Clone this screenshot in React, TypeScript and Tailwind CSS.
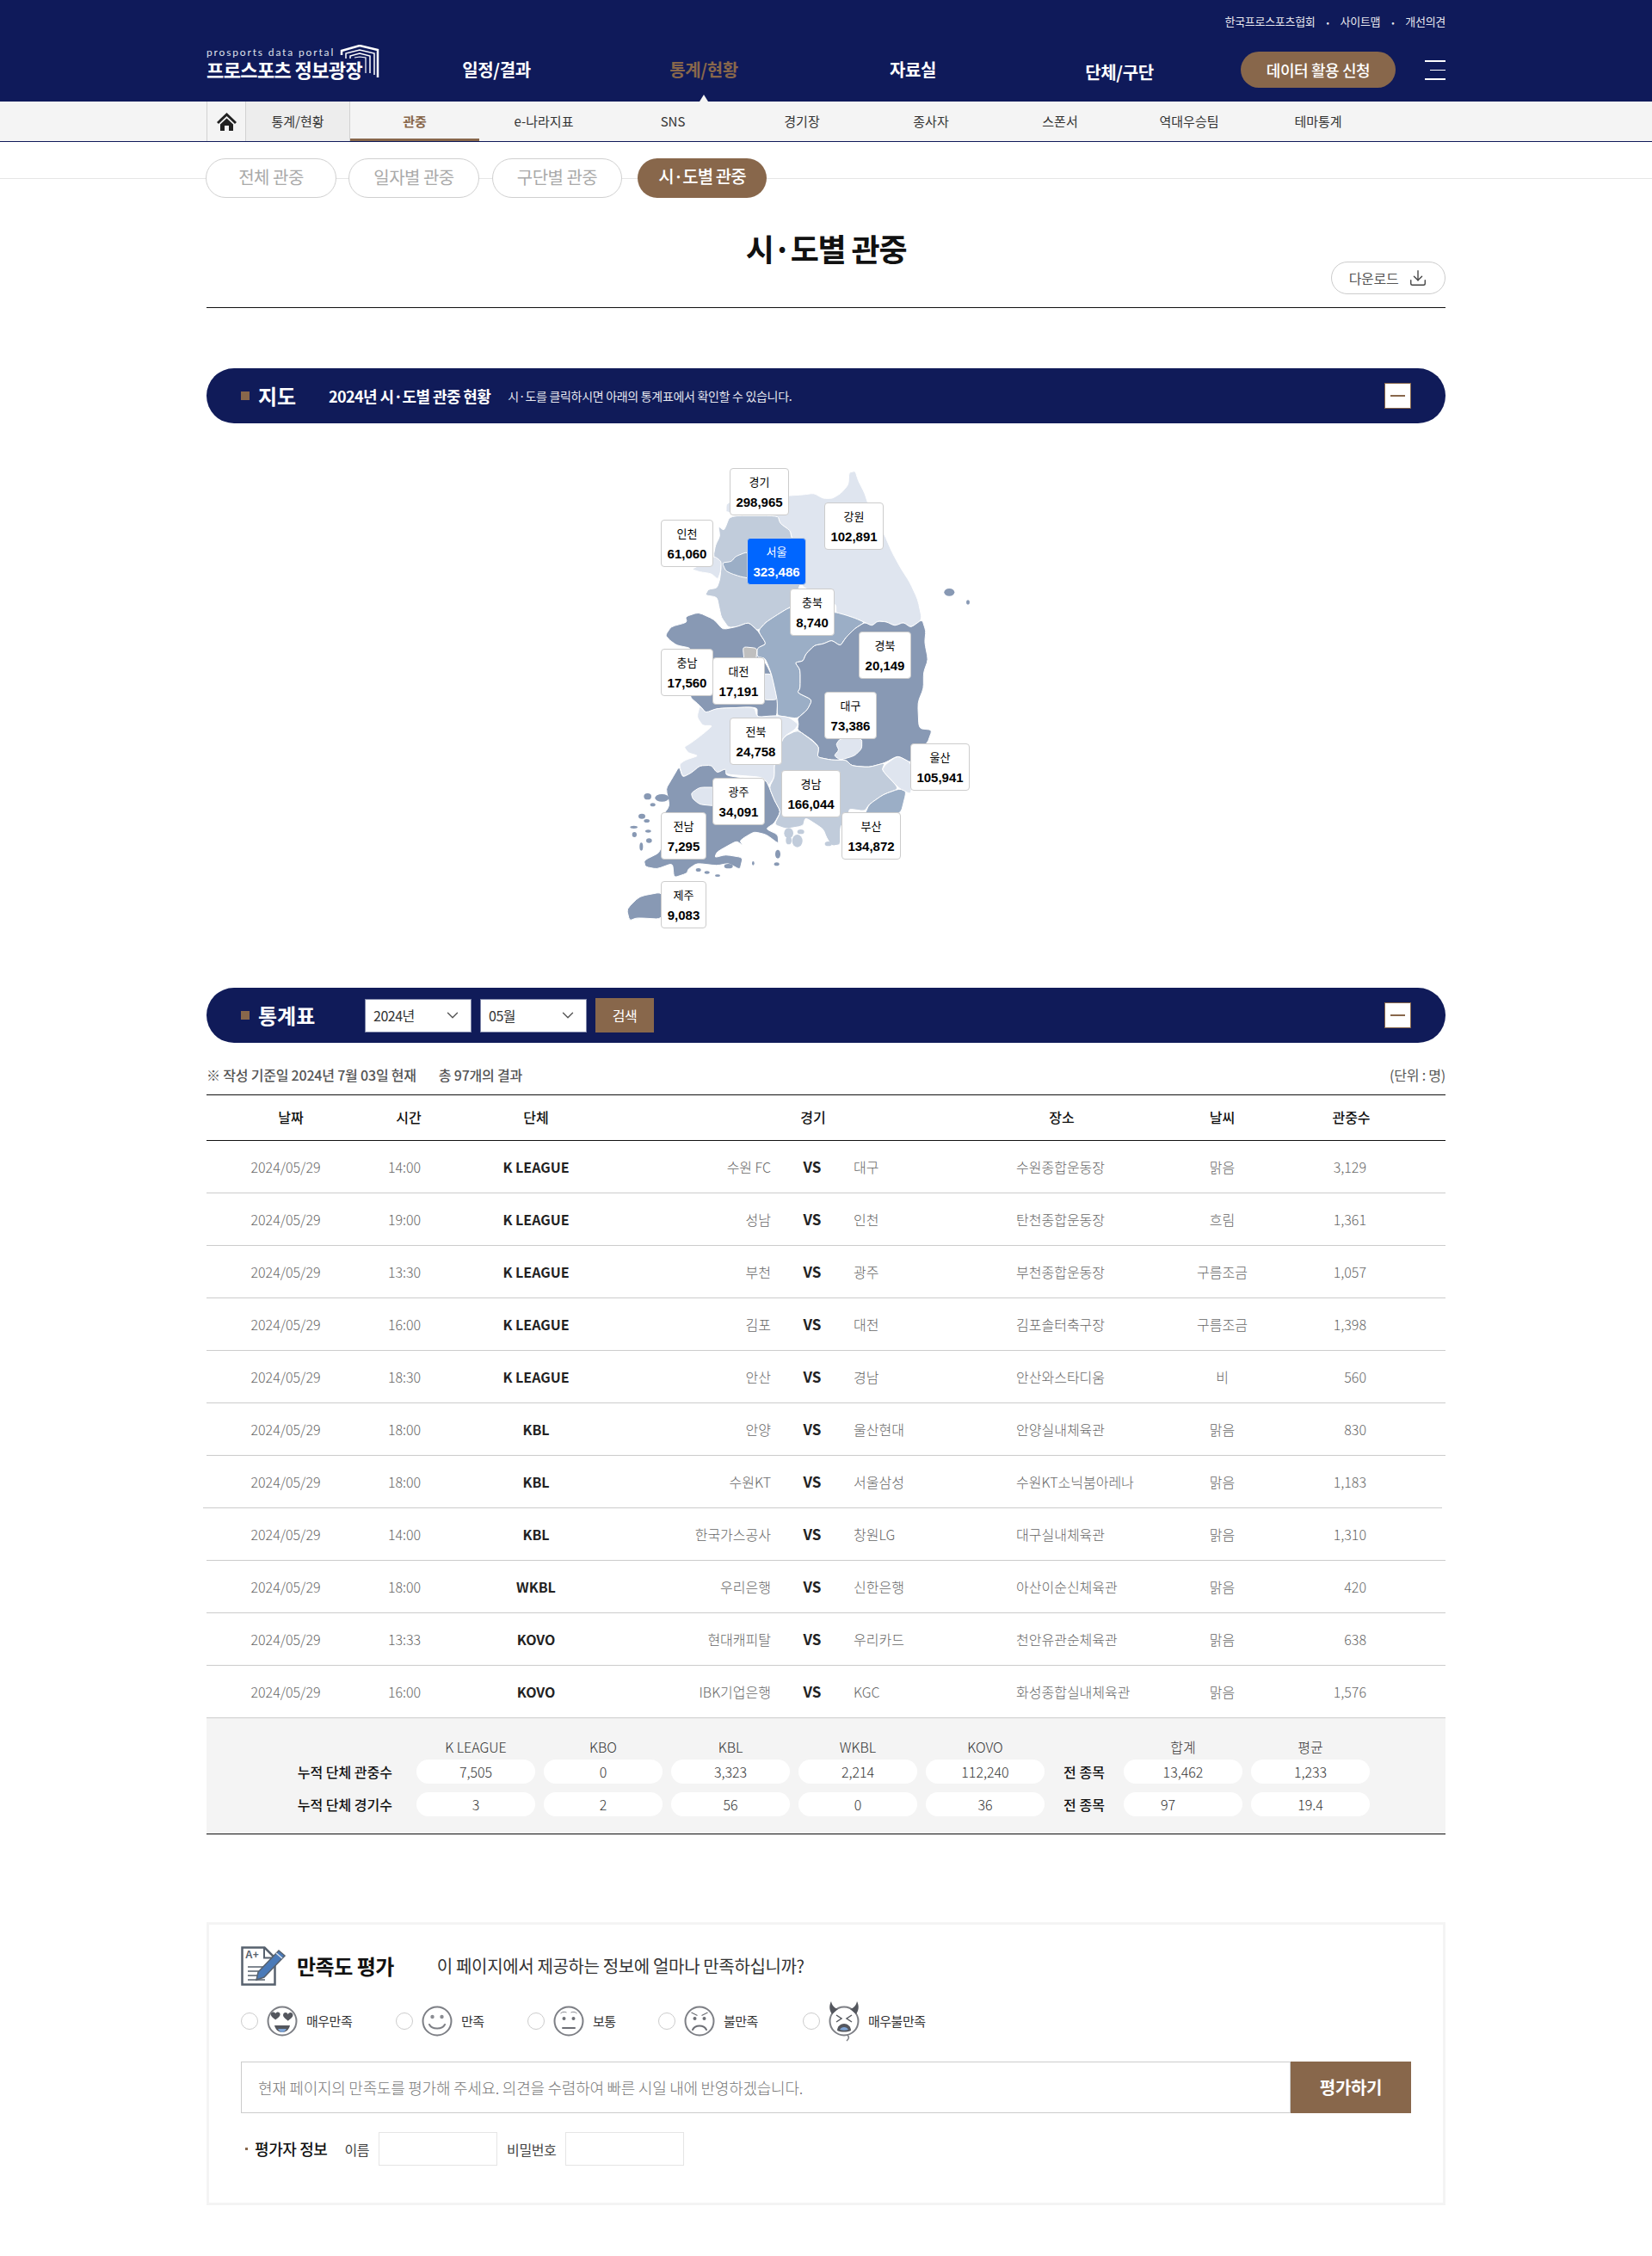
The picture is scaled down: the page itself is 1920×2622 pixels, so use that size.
import React from 'react';
import { Download, ChevronDown } from 'lucide-react';

type Pt = [number, number];

// rounds the corners of a point list a little, without losing the shape of the region
const smooth = (pts: Pt[]) => {
  const n = pts.length;
  let d = '';
  for (let i = 0; i < n; i++) {
    const a = pts[i];
    const p = pts[(i - 1 + n) % n];
    const q = pts[(i + 1) % n];
    const sx = a[0] + (p[0] - a[0]) * 0.25;
    const sy = a[1] + (p[1] - a[1]) * 0.25;
    const ex = a[0] + (q[0] - a[0]) * 0.25;
    const ey = a[1] + (q[1] - a[1]) * 0.25;
    d += `${i === 0 ? 'M' : 'L'}${sx} ${sy}Q${a[0]} ${a[1]} ${ex} ${ey}`;
  }
  return `${d}Z`;
};

const LIGHT = '#dfe5ef';
const MID = '#c1ccdb';
const BLUE = '#9baec6';
const DARK = '#8899b4';

const REGIONS: { fill: string; pts: Pt[] }[] = [
  // gangwon
  { fill: LIGHT, pts: [[860, 88], [882, 82], [892, 115], [915, 160], [926, 195], [982, 300], [1010, 365], [1040, 420], [1072, 470], [1100, 530], [1115, 600], [1076, 628], [1050, 610], [1020, 622], [990, 608], [960, 606], [940, 622], [915, 610], [880, 595], [850, 585], [815, 578], [815, 548], [760, 520], [690, 480], [710, 400], [660, 312], [655, 290], [620, 265], [612, 240], [432, 228], [432, 200], [445, 190], [652, 168], [700, 165], [738, 160], [770, 178], [802, 178], [832, 160], [858, 130]] },
  // gyeonggi
  { fill: MID, pts: [[445, 238], [612, 238], [620, 265], [655, 290], [660, 315], [710, 400], [690, 480], [655, 558], [640, 565], [600, 590], [570, 610], [543, 640], [510, 610], [470, 625], [440, 628], [415, 592], [408, 560], [400, 522], [358, 515], [370, 495], [400, 490], [410, 460], [415, 410], [387, 380], [395, 340], [410, 310], [405, 275], [425, 290]] },
  // incheon
  { fill: LIGHT, pts: [[388, 378], [415, 397], [412, 435], [403, 460], [380, 440], [340, 434], [312, 425], [340, 410]] },
  // seoul
  { fill: BLUE, pts: [[418, 402], [450, 398], [465, 380], [500, 366], [520, 370], [520, 458], [480, 450], [450, 440], [430, 430]] },
  // chungnam
  { fill: DARK, pts: [[220, 655], [240, 625], [295, 610], [290, 590], [335, 575], [390, 600], [420, 635], [470, 625], [510, 610], [543, 640], [572, 685], [540, 700], [590, 790], [612, 880], [608, 942], [540, 942], [540, 905], [400, 910], [385, 922], [360, 925], [340, 900], [305, 870], [300, 760], [310, 700], [260, 690], [235, 672]] },
  // sejong
  { fill: '#bfbfbf', pts: [[490, 695], [540, 700], [536, 745], [495, 745]] },
  // daejeon
  { fill: LIGHT, pts: [[560, 790], [590, 790], [602, 840], [610, 880], [560, 880]] },
  // chungbuk
  { fill: BLUE, pts: [[543, 640], [570, 610], [600, 590], [640, 565], [655, 558], [815, 575], [850, 585], [880, 595], [915, 610], [880, 632], [850, 662], [830, 692], [800, 672], [770, 685], [740, 690], [710, 720], [700, 745], [672, 750], [690, 775], [690, 840], [680, 855], [732, 880], [715, 915], [680, 945], [640, 940], [610, 935], [610, 880], [590, 790], [568, 735], [540, 730], [540, 700], [572, 685]] },
  // jeonbuk
  { fill: LIGHT, pts: [[340, 900], [360, 925], [400, 910], [530, 905], [540, 940], [605, 935], [650, 940], [684, 965], [670, 985], [630, 1010], [600, 1105], [600, 1150], [580, 1180], [560, 1150], [430, 1140], [430, 1120], [400, 1135], [380, 1108], [340, 1110], [310, 1135], [280, 1150], [268, 1105], [290, 1090], [335, 1075], [300, 1065], [285, 1045], [310, 1030], [350, 1000], [385, 970], [350, 970], [330, 940]] },
  // jeonnam
  { fill: DARK, pts: [[268, 1112], [280, 1150], [310, 1135], [340, 1110], [380, 1108], [400, 1135], [430, 1120], [432, 1145], [570, 1160], [582, 1185], [600, 1230], [622, 1270], [600, 1310], [570, 1330], [612, 1350], [615, 1382], [572, 1350], [530, 1340], [495, 1360], [480, 1372], [490, 1388], [468, 1372], [400, 1410], [392, 1430], [430, 1420], [490, 1430], [480, 1472], [440, 1450], [400, 1458], [330, 1450], [300, 1470], [295, 1485], [250, 1500], [245, 1450], [190, 1470], [150, 1462], [145, 1440], [205, 1410], [205, 1290], [235, 1250], [222, 1190], [240, 1160]] },
  // gwangju
  { fill: LIGHT, pts: [[310, 1205], [340, 1185], [395, 1185], [395, 1250], [340, 1245], [315, 1225]] },
  // gyeongbuk
  { fill: DARK, pts: [[915, 610], [940, 622], [960, 606], [990, 608], [1020, 622], [1050, 610], [1076, 628], [1115, 600], [1128, 640], [1124, 680], [1136, 740], [1120, 785], [1120, 840], [1100, 890], [1104, 980], [1150, 985], [1132, 1035], [1076, 1050], [1076, 1100], [1030, 1075], [985, 1100], [930, 1115], [870, 1110], [850, 1090], [800, 1090], [750, 1080], [755, 1045], [735, 1022], [680, 985], [684, 965], [680, 945], [715, 915], [732, 880], [680, 855], [690, 840], [690, 775], [672, 750], [700, 745], [710, 720], [740, 690], [770, 685], [800, 672], [830, 692], [850, 662], [880, 632]] },
  // daegu
  { fill: LIGHT, pts: [[830, 1015], [905, 1015], [905, 1050], [880, 1075], [830, 1090], [808, 1075], [825, 1055], [815, 1035]] },
  // gyeongnam
  { fill: MID, pts: [[682, 985], [735, 1025], [755, 1045], [750, 1080], [800, 1090], [850, 1090], [870, 1110], [930, 1115], [985, 1100], [975, 1125], [1035, 1190], [980, 1210], [930, 1245], [915, 1268], [860, 1260], [860, 1290], [830, 1320], [830, 1385], [800, 1390], [782, 1360], [770, 1330], [708, 1290], [700, 1320], [640, 1330], [600, 1315], [622, 1270], [600, 1230], [582, 1185], [600, 1150], [600, 1105], [630, 1010]] },
  // ulsan
  { fill: LIGHT, pts: [[988, 1105], [1030, 1075], [1078, 1100], [1078, 1210], [1036, 1190], [975, 1125]] },
  // busan
  { fill: BLUE, pts: [[1036, 1190], [1060, 1200], [1040, 1280], [915, 1280], [930, 1245], [980, 1210]] },
  // jeju
  { fill: DARK, pts: [[85, 1610], [130, 1565], [210, 1550], [210, 1645], [120, 1640], [95, 1650]] },
];

const ISLANDS: { cx: number; cy: number; rx: number; ry: number; fill: string }[] = [
  { cx: 1210, cy: 505, rx: 18, ry: 13, fill: DARK },
  { cx: 1275, cy: 540, rx: 6, ry: 8, fill: DARK },
  { cx: 158, cy: 1217, rx: 13, ry: 11, fill: DARK },
  { cx: 208, cy: 1222, rx: 24, ry: 13, fill: DARK },
  { cx: 176, cy: 1246, rx: 9, ry: 6, fill: DARK },
  { cx: 138, cy: 1286, rx: 12, ry: 9, fill: DARK },
  { cx: 155, cy: 1302, rx: 10, ry: 6, fill: DARK },
  { cx: 110, cy: 1324, rx: 13, ry: 5, fill: DARK },
  { cx: 160, cy: 1338, rx: 10, ry: 5, fill: DARK },
  { cx: 112, cy: 1350, rx: 8, ry: 9, fill: DARK },
  { cx: 163, cy: 1371, rx: 10, ry: 8, fill: DARK },
  { cx: 136, cy: 1392, rx: 6, ry: 14, fill: DARK },
  { cx: 440, cy: 1460, rx: 15, ry: 8, fill: DARK },
  { cx: 335, cy: 1473, rx: 9, ry: 6, fill: DARK },
  { cx: 365, cy: 1482, rx: 9, ry: 5, fill: DARK },
  { cx: 402, cy: 1493, rx: 9, ry: 4, fill: DARK },
  { cx: 612, cy: 1418, rx: 9, ry: 15, fill: DARK },
  { cx: 608, cy: 1453, rx: 9, ry: 6, fill: DARK },
  { cx: 526, cy: 1450, rx: 4, ry: 7, fill: DARK },
  { cx: 650, cy: 1345, rx: 16, ry: 18, fill: MID },
  { cx: 680, cy: 1372, rx: 18, ry: 22, fill: MID },
  { cx: 650, cy: 1370, rx: 10, ry: 14, fill: MID },
  { cx: 692, cy: 1340, rx: 12, ry: 8, fill: MID },
  { cx: 788, cy: 1382, rx: 12, ry: 8, fill: MID },
];

const LABELS = [
  { name: '경기', value: '298,965', x: 848, y: 544, w: 69 },
  { name: '강원', value: '102,891', x: 958, y: 584, w: 69 },
  { name: '인천', value: '61,060', x: 768, y: 604, w: 61 },
  { name: '서울', value: '323,486', x: 868, y: 625, w: 69, active: true },
  { name: '충북', value: '8,740', x: 918, y: 684, w: 52 },
  { name: '경북', value: '20,149', x: 998, y: 734, w: 61 },
  { name: '충남', value: '17,560', x: 768, y: 754, w: 61 },
  { name: '대전', value: '17,191', x: 828, y: 764, w: 61 },
  { name: '대구', value: '73,386', x: 958, y: 804, w: 61 },
  { name: '전북', value: '24,758', x: 848, y: 834, w: 61 },
  { name: '울산', value: '105,941', x: 1058, y: 864, w: 69 },
  { name: '경남', value: '166,044', x: 908, y: 895, w: 69 },
  { name: '광주', value: '34,091', x: 828, y: 904, w: 61 },
  { name: '전남', value: '7,295', x: 768, y: 944, w: 53 },
  { name: '부산', value: '134,872', x: 978, y: 944, w: 69 },
  { name: '제주', value: '9,083', x: 768, y: 1024, w: 53 },
];

const SUB_NAV = ['관중', 'e-나라지표', 'SNS', '경기장', '종사자', '스폰서', '역대우승팀', '테마통계'];

const ROWS = [
  ['14:00', 'K LEAGUE', '수원 FC', '대구', '수원종합운동장', '맑음', '3,129'],
  ['19:00', 'K LEAGUE', '성남', '인천', '탄천종합운동장', '흐림', '1,361'],
  ['13:30', 'K LEAGUE', '부천', '광주', '부천종합운동장', '구름조금', '1,057'],
  ['16:00', 'K LEAGUE', '김포', '대전', '김포솔터축구장', '구름조금', '1,398'],
  ['18:30', 'K LEAGUE', '안산', '경남', '안산와스타디움', '비', '560'],
  ['18:00', 'KBL', '안양', '울산현대', '안양실내체육관', '맑음', '830'],
  ['18:00', 'KBL', '수원KT', '서울삼성', '수원KT소닉붐아레나', '맑음', '1,183'],
  ['14:00', 'KBL', '한국가스공사', '창원LG', '대구실내체육관', '맑음', '1,310'],
  ['18:00', 'WKBL', '우리은행', '신한은행', '아산이순신체육관', '맑음', '420'],
  ['13:33', 'KOVO', '현대캐피탈', '우리카드', '천안유관순체육관', '맑음', '638'],
  ['16:00', 'KOVO', 'IBK기업은행', 'KGC', '화성종합실내체육관', '맑음', '1,576'],
];

const SectionBar = ({ children }: { children: React.ReactNode }) => (
  <div className="flex h-[64px] items-center whitespace-nowrap rounded-[32px] bg-[#101b59] pl-[40px] pr-[40px]">
    <span className="mr-[10px] h-[10px] w-[10px] bg-[#88674b]" />
    {children}
    <span className="ml-auto flex h-[30px] w-[31px] items-center justify-center border border-[#88674b] bg-white">
      <span className="h-[2px] w-[17px] bg-[#88674b]" />
    </span>
  </div>
);

const Select = ({ value }: { value: string }) => (
  <div className="flex h-[39px] w-[124px] items-center justify-between border border-[#7f86a8] bg-white pl-[9px] pr-[10px] text-[16px] tracking-[-0.5px] text-[#333]">
    {value}
    <ChevronDown size={22} strokeWidth={1.5} className="text-[#555]" />
  </div>
);

const Face = ({ kind }: { kind: number }) => (
  <svg width="36" height="46" viewBox="0 0 36 46" className="overflow-visible">
    <circle cx="18" cy="23" r="16.5" fill="#fff" stroke="#7d7f85" strokeWidth="2" />
    {kind === 0 && (
      <>
        <path d="M7 18c0-4 5-4 6-1 1-3 6-3 6 1 0 3-4 5-6 7-2-2-6-4-6-7z" transform="translate(-1.5 -1) scale(0.9)" fill="#54575e" />
        <path d="M19 18c0-4 5-4 6-1 1-3 6-3 6 1 0 3-4 5-6 7-2-2-6-4-6-7z" transform="translate(1 -1) scale(0.95)" fill="#54575e" />
        <path d="M9 28h18c-1 5-5 8-9 8s-8-3-9-8z" fill="#54575e" />
        <path d="M13 32h10c-1 2-3 4-5 4s-4-2-5-4z" fill="#7ea4d6" />
      </>
    )}
    {kind === 1 && (
      <>
        <circle cx="12.5" cy="18" r="2.2" fill="#8a8c92" />
        <circle cx="23.5" cy="18" r="2.2" fill="#8a8c92" />
        <path d="M9 27c3 6 15 6 18 0" fill="none" stroke="#7d7f85" strokeWidth="2" strokeLinecap="round" />
      </>
    )}
    {kind === 2 && (
      <>
        <path d="M8.500 14c2-2 5-2 7-1M20.500 13c2-1 5-1 7 1" fill="none" stroke="#8a8c92" strokeWidth="1" />
        <circle cx="12.500" cy="20" r="2" fill="#6d6f75" />
        <circle cx="23.500" cy="20" r="2" fill="#6d6f75" />
        <path d="M11 31h14" stroke="#6d6f75" strokeWidth="2" strokeLinecap="round" />
      </>
    )}
    {kind === 3 && (
      <>
        <path d="M8.500 13l7 3.500M27.500 13l-7 3.500" stroke="#6d6f75" strokeWidth="1.300" />
        <circle cx="12.500" cy="20" r="2" fill="#6d6f75" />
        <circle cx="23.500" cy="20" r="2" fill="#6d6f75" />
        <path d="M10 33c3-6 13-6 16 0" fill="none" stroke="#6d6f75" strokeWidth="2" strokeLinecap="round" />
      </>
    )}
    {kind === 4 && (
      <>
        <path d="M4 15C0 9 1 4 3 0c1 5 4 8 8 9z" fill="#54575e" />
        <path d="M32 15c4-6 3-11 1-15-1 5-4 8-8 9z" fill="#54575e" />
        <path d="M9 16l6 4-6 4M27 16l-6 4 6 4" fill="none" stroke="#54575e" strokeWidth="1.500" />
        <path d="M10 34c0-5 4-8 8-8s8 3 8 8c-5 2-11 2-16 0z" fill="#54575e" />
        <path d="M13 33c1-2 3-3 5-3s4 1 5 3c-3 1-7 1-10 0z" fill="#7ea4d6" />
        <path d="M22 39c2 3 2 4-1 7" fill="none" stroke="#7d7f85" strokeWidth="1.500" />
      </>
    )}
  </svg>
);

const FACES = [
  { label: '매우만족', radio: 0 },
  { label: '만족', radio: 180 },
  { label: '보통', radio: 333 },
  { label: '불만족', radio: 485 },
  { label: '매우불만족', radio: 653 },
];

const TOTAL_COLS = 'grid grid-cols-[234px_138px_138px_138px_138px_138px_72px_138px_138px] gap-x-[10px]';

export default function App() {
  return (
    <div className="w-[1920px] bg-white pb-[59px] text-[#222]" style={{ fontFamily: '"Noto Sans CJK KR", "Noto Sans", sans-serif' }}>
      {/* top header */}
      <header className="relative h-[118px] bg-[#0f1a5a] text-white">
        <div className="mx-auto w-[1440px]">
          <div className="flex h-[50px] items-center justify-end gap-[13px] text-[13px] tracking-[-0.3px] text-[#e8e8ee]">
            <span>한국프로스포츠협회</span>
            <span className="text-[10px]">•</span>
            <span>사이트맵</span>
            <span className="text-[10px]">•</span>
            <span>개선의견</span>
          </div>
          <div className="flex h-[68px] items-start">
            <div className="relative w-[200px] pt-[4px]">
              <div className="text-[12px] leading-[14px] tracking-[1.85px] text-[#dfe1ea]" style={{ fontFamily: '"Lato", sans-serif' }}>prosports data portal</div>
              <div className="-mt-[2px] text-[22px] font-bold leading-[28px] tracking-[-0.6px]">프로스포츠 정보광장</div>
              <svg width="46" height="38" viewBox="0 0 46 38" className="absolute left-[155px] top-[2px]" fill="none" stroke="#fff">
                <path d="M2 12V7L23 1l21 5v32" strokeWidth="2.500" />
                <path d="M7 16V10l16-4 17 4v25" strokeWidth="1.500" />
                <path d="M12 16v-3l11-3 12 3v20" strokeWidth="1.500" />
                <path d="M17 15l6-1 7 1v18" strokeWidth="1.200" />
              </svg>
            </div>
            <nav className="flex pt-[1px] text-[20px] font-bold leading-[60px] tracking-[-0.4px]">
              <span className="ml-[69px] w-[136px] text-center">일정/결과</span>
              <span className="ml-[105px] w-[136px] text-center text-[#88674b]">통계/현황</span>
              <span className="ml-[107px] w-[136px] text-center">자료실</span>
              <span className="ml-[104px] w-[136px] pt-[3px] text-center">단체/구단</span>
            </nav>
            <div className="absolute left-[1442px] top-[60px] flex h-[42px] w-[180px] items-center justify-center rounded-[21px] bg-[#88674b] text-[18px] font-medium tracking-[-0.4px]">데이터 활용 신청</div>
            <div className="absolute left-[1656px] top-[70px] flex h-[23px] w-[24px] flex-col items-end justify-between">
              <span className="h-[2px] w-full bg-white" />
              <span className="h-[1px] w-[18px] bg-white" />
              <span className="h-[2px] w-full bg-white" />
            </div>
          </div>
        </div>
        <span className="absolute bottom-0 left-[813px] h-0 w-0 border-x-[5px] border-b-[8px] border-x-transparent border-b-[#f4f4f4]" />
      </header>

      {/* sub nav */}
      <div className="h-[47px] border-b border-[#0f1a5a] bg-[#f4f4f4]">
        <div className="mx-auto flex h-[46px] w-[1440px] items-stretch text-[15px] text-[#333]">
          <div className="flex w-[45px] items-center justify-center border-l border-[#d2d2d2]">
            <svg width="23" height="22" viewBox="0 0 23 22">
              <path d="M11.500 1L0 12l2 2 9.500-9 9.500 9 2-2z" fill="#222" />
              <path d="M4 14.500l7.500-7 7.500 7V22h-5v-6H9v6H4z" fill="#222" />
            </svg>
          </div>
          <div className="flex w-[122px] items-center justify-center border-x border-[#d2d2d2] bg-[#ededed]">통계/현황</div>
          {SUB_NAV.map((item, i) => (
            <div
              key={item}
              className={i === 0
                ? 'flex w-[150px] items-center justify-center border-b-[3px] border-[#88674b] pt-[3px] font-bold text-[#88674b]'
                : 'flex w-[150px] items-center justify-center'}
            >
              {item}
            </div>
          ))}
        </div>
      </div>

      {/* page tabs */}
      <div className="relative mt-[19px] h-[46px]">
        <div className="absolute inset-x-0 top-[23px] h-px bg-[#e5e5e5]" />
        <div className="relative mx-auto flex w-[1440px] text-[20px] leading-[42px] tracking-[-0.5px] text-[#aaa]">
          <span className="ml-[-1px] flex h-[46px] w-[152px] items-start justify-center rounded-[23px] border border-[#d0d0d0] bg-white">전체 관중</span>
          <span className="ml-[14px] flex h-[46px] w-[152px] items-start justify-center rounded-[23px] border border-[#d0d0d0] bg-white">일자별 관중</span>
          <span className="ml-[15px] flex h-[46px] w-[151px] items-start justify-center rounded-[23px] border border-[#d0d0d0] bg-white">구단별 관중</span>
          <span className="ml-[18px] h-[46px] w-[150px] rounded-[23px] bg-[#88674b] text-center font-medium tracking-[-0.9px] text-white">시·도별 관중</span>
        </div>
      </div>

      <main className="mx-auto w-[1440px]">
        {/* title */}
        <div className="relative h-[128px] border-b border-[#111]">
          <h1 className="pt-[33px] text-center text-[36px] font-bold leading-[50px] tracking-[-1.2px] text-[#111]">시·도별 관중</h1>
          <button className="absolute right-0 top-[74px] flex h-[38px] w-[133px] items-center justify-center gap-[12px] rounded-[19px] border border-[#ccc] bg-white text-[16px] tracking-[-0.3px] text-[#555]">
            다운로드
            <Download size={22} strokeWidth={1.5} className="text-[#444]" />
          </button>
        </div>

        {/* map */}
        <div className="mt-[70px]">
          <SectionBar>
            <span className="w-[44px] text-[24px] font-bold text-white">지도</span>
            <span className="ml-[38px] text-[18px] font-bold tracking-[-0.6px] text-white">2024년 시·도별 관중 현황</span>
            <span className="ml-[20px] text-[14px] tracking-[-0.3px] text-[#e5e6ee]">시·도를 클릭하시면 아래의 통계표에서 확인할 수 있습니다.</span>
          </SectionBar>
        </div>
        <div className="relative h-[656px]">
          <svg width="460" height="580" viewBox="0 0 1380 1740" className="absolute left-[460px] top-[28px]">
            {REGIONS.map((r, i) => (
              <path key={i} d={smooth(r.pts)} fill={r.fill} stroke="#fff" strokeWidth="3" strokeLinejoin="round" />
            ))}
            {ISLANDS.map((s, i) => (
              <ellipse key={i} cx={s.cx} cy={s.cy} rx={s.rx} ry={s.ry} fill={s.fill} />
            ))}
          </svg>
          {LABELS.map((l) => (
            <div
              key={l.name}
              className={l.active
                ? 'absolute flex h-[55px] flex-col items-center rounded-[4px] border border-[#c5cfdf] bg-[#0066ff] text-white'
                : 'absolute flex h-[55px] flex-col items-center rounded-[4px] border border-[#cccccc] bg-white text-black'}
              style={{ left: l.x - 240, top: l.y - 492, width: l.w, fontFamily: '"Liberation Sans", "Noto Sans CJK KR", sans-serif' }}
            >
              <span className="mt-[6px] text-[13px] leading-[20px]">{l.name}</span>
              <span className="mt-[2px] text-[15px] font-bold leading-[22px]">{l.value}</span>
            </div>
          ))}
        </div>

        {/* stats table */}
        <SectionBar>
          <span className="w-[66px] text-[24px] font-bold text-white">통계표</span>
          <div className="ml-[58px] flex items-center gap-[10px]">
            <Select value="2024년" />
            <Select value="05월" />
            <span className="flex h-[40px] w-[68px] items-center justify-center bg-[#88674b] text-[16px] tracking-[-0.5px] text-white">검색</span>
          </div>
        </SectionBar>
        <div className="flex h-[60px] items-center justify-between pt-[14px] text-[16px] tracking-[-0.2px] text-[#555]">
          <div className="font-medium">
            <span>※ 작성 기준일 2024년 7월 03일 현재</span>
            <span className="ml-[26px]">총 97개의 결과</span>
          </div>
          <span>(단위 : 명)</span>
        </div>

        <div className="grid h-[54px] grid-cols-[196px_78px_218px_426px_152px_221px_79px_70px] items-center border-y border-[#111] pb-[2px] text-center text-[16px] font-medium text-[#111]">
          <span>날짜</span>
          <span>시간</span>
          <span>단체</span>
          <span>경기</span>
          <span>장소</span>
          <span>날씨</span>
          <span>관중수</span>
          <span />
        </div>

        {ROWS.map((r, i) => (
          <div
            key={i}
            className={`relative grid h-[61px] grid-cols-[184px_92px_214px_166px_96px_189px_159px_161px_87px_92px] items-center pb-[1px] text-[16px] font-light text-[#666] ${i === 6 ? '' : 'border-b border-[#ccc]'}`}
          >
            <span className="text-center">2024/05/29</span>
            <span className="text-center">{r[0]}</span>
            <span className="text-center font-bold text-[#222]">{r[1]}</span>
            <span className="text-right">{r[2]}</span>
            <span className="text-center text-[17px] font-bold text-[#222]">VS</span>
            <span>{r[3]}</span>
            <span>{r[4]}</span>
            <span className="text-center">{r[5]}</span>
            <span className="text-right">{r[6]}</span>
            <span />
            {/* this row's rule sits a few pixels left in the source page */}
            {i === 6 && <span className="absolute -left-[4px] bottom-0 right-[4px] h-px bg-[#ccc]" />}
          </div>
        ))}

        {/* totals */}
        <div className="border-b border-[#111] bg-[#f4f4f4] pb-[20px] pt-[21px] text-[16px] font-light text-[#333]">
          <div className={`${TOTAL_COLS} mb-[7px] h-[20px] items-center text-center`}>
            <span />
            <span>K LEAGUE</span>
            <span>KBO</span>
            <span>KBL</span>
            <span>WKBL</span>
            <span>KOVO</span>
            <span />
            <span>합계</span>
            <span>평균</span>
          </div>
          <div className={`${TOTAL_COLS} gap-y-[10px] text-center`}>
            <span className="pr-[18px] text-right font-medium leading-[28px] text-[#111]">누적 단체 관중수</span>
            {['7,505', '0', '3,323', '2,214', '112,240'].map((v) => (
              <span key={v} className="h-[28px] rounded-[14px] bg-white leading-[28px]">{v}</span>
            ))}
            <span className="font-medium leading-[28px] text-[#111]">전 종목</span>
            <span className="h-[28px] rounded-[14px] bg-white leading-[28px]">13,462</span>
            <span className="h-[28px] rounded-[14px] bg-white leading-[28px]">1,233</span>
            <span className="pr-[18px] text-right font-medium leading-[28px] text-[#111]">누적 단체 경기수</span>
            {['3', '2', '56', '0', '36'].map((v, i) => (
              <span key={i} className="h-[28px] rounded-[14px] bg-white leading-[28px]">{v}</span>
            ))}
            <span className="font-medium leading-[28px] text-[#111]">전 종목</span>
            <span className="h-[28px] rounded-[14px] bg-white pl-[43px] text-left leading-[28px]">97</span>
            <span className="h-[28px] rounded-[14px] bg-white leading-[28px]">19.4</span>
          </div>
        </div>

        {/* satisfaction */}
        <section className="mt-[102px] h-[329px] border-[3px] border-[#f4f4f4] px-[37px] pt-[25px]">
          <div className="flex h-[46px] items-center">
            <svg width="54" height="46" viewBox="0 0 54 46" fill="none">
              <path d="M1.500 1.500h26l12 12v31h-38z" fill="#fff" stroke="#57616e" strokeWidth="2.500" />
              <path d="M27 1.500v12h12" stroke="#57616e" strokeWidth="2" />
              <path d="M8 24h18M8 29h15M8 34h13M8 39h20" stroke="#57616e" strokeWidth="1.500" />
              <text x="5" y="14" fontSize="12" fontWeight="700" fill="#57616e" fontFamily="Liberation Sans">A+</text>
              <path d="M44 5l7 6-24 25-9 3 2-9z" fill="#4a7ab8" stroke="#57616e" strokeWidth="1.500" />
              <path d="M41 8l7 6" stroke="#dfe5ef" strokeWidth="1.500" />
            </svg>
            <h2 className="ml-[11px] text-[24px] font-bold tracking-[-0.5px] text-[#111]">만족도 평가</h2>
            <p className="ml-[50px] text-[20px] tracking-[-0.35px] text-[#333]">이 페이지에서 제공하는 정보에 얼마나 만족하십니까?</p>
          </div>
          <div className="relative mt-[18px] h-[46px]">
            {FACES.map((f, i) => (
              <div key={f.label} className="absolute top-0 flex h-[46px] items-center" style={{ left: f.radio }}>
                <span className="h-[20px] w-[20px] rounded-full border border-[#ccc] bg-white" />
                <span className="ml-[10px]"><Face kind={i} /></span>
                <span className="ml-[10px] text-[15px] tracking-[-0.5px] text-[#333]">{f.label}</span>
              </div>
            ))}
          </div>
          <div className="mt-[24px] flex h-[60px] items-stretch">
            <div className="flex flex-1 items-center border border-[#ccc] pl-[19px] text-[18px] font-light tracking-[-0.25px] text-[#777]">현재 페이지의 만족도를 평가해 주세요. 의견을 수렴하여 빠른 시일 내에 반영하겠습니다.</div>
            <button className="w-[140px] bg-[#88674b] text-[20px] font-bold tracking-[-0.3px] text-white">평가하기</button>
          </div>
          <div className="mt-[22px] flex h-[39px] items-center text-[16px] tracking-[-0.4px] text-[#444]">
            <span className="ml-[5px] h-[3px] w-[3px] bg-[#88674b]" />
            <span className="ml-[8px] text-[18px] font-medium text-[#111]">평가자 정보</span>
            <span className="ml-[20px]">이름</span>
            <span className="ml-[11px] h-[39px] w-[138px] border border-[#e5e5e5]" />
            <span className="ml-[11px]">비밀번호</span>
            <span className="ml-[11px] h-[39px] w-[138px] border border-[#e5e5e5]" />
          </div>
        </section>
      </main>
    </div>
  );
}
